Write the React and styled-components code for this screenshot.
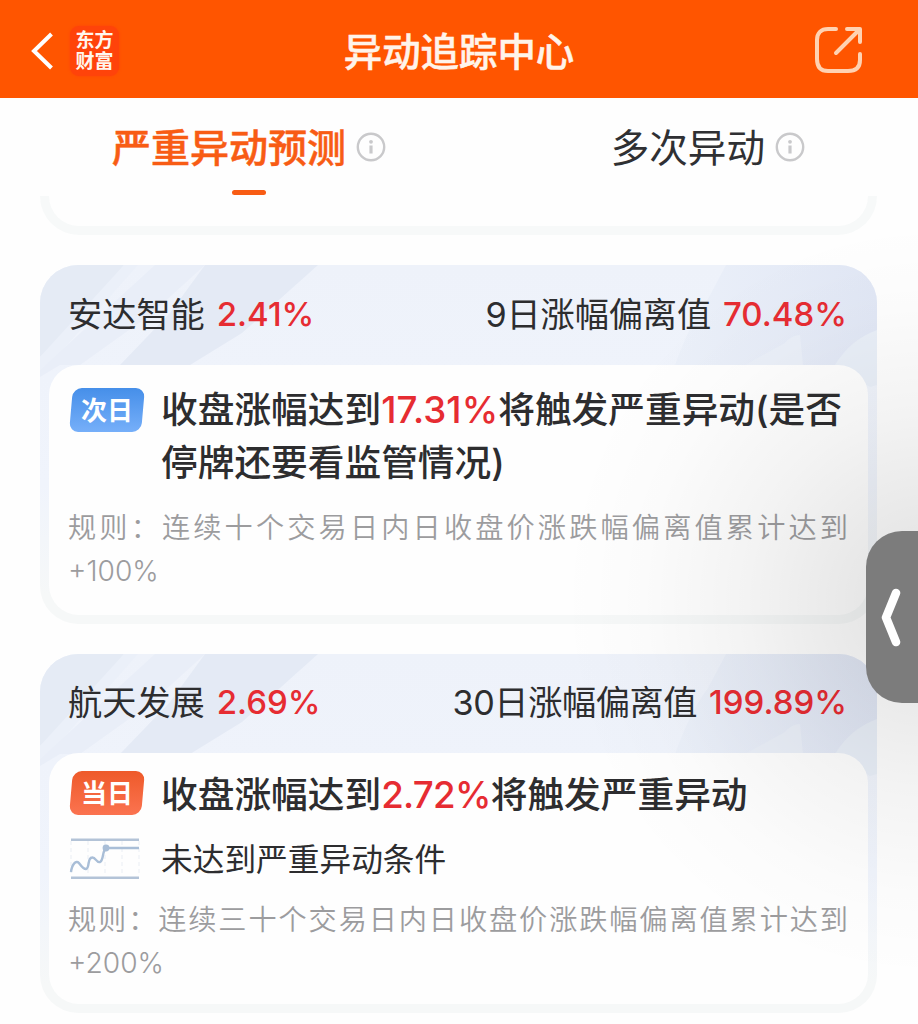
import React from "react";
import styled, { createGlobalStyle } from "styled-components";

const GlobalStyle = createGlobalStyle`
    * {
        box-sizing: border-box;
    }

    body {
        margin: 0;
        background-color: #fefefe;
        font-family: Inter, "Noto Sans CJK SC", sans-serif;
        color: #2d2d2f;
    }
`;

const Page = styled.div`
    position: relative;
    width: 918px;
    height: 1024px;
    overflow: hidden;
    display: flex;
    flex-direction: column;
`;

const TopBar = styled.header`
    height: 98px;
    flex-shrink: 0;
    padding: 3px 56px 0 31px;
    display: grid;
    grid-template-columns: 200px 1fr 175px;
    align-items: center;
    background-color: #ff5500;
`;

const TopLeft = styled.div`
    display: flex;
    align-items: center;
    gap: 17px;
`;

const Logo = styled.div`
    width: 49px;
    height: 50px;
    padding-top: 4px;
    border-radius: 9px;
    background-color: #ff430a;
    box-shadow: 0 0 3px #ff430a;
    color: #fff6ee;
    font-size: 19px;
    font-weight: 700;
    line-height: 21px;
    text-align: center;
`;

const Title = styled.h1`
    margin: 0;
    padding-top: 2px;
    color: #fff4ea;
    font-size: 38.4px;
    font-weight: 500;
    line-height: 50px;
    text-align: center;
    -webkit-text-stroke: 0.5px #fff4ea;
`;

const TopRight = styled.div`
    display: flex;
    justify-content: flex-end;
    padding-bottom: 2px;
`;

const Tabs = styled.nav`
    height: 98px;
    flex-shrink: 0;
    display: flex;
    justify-content: space-between;
    padding: 24px 113px 0 112px;
`;

const Tab = styled.div`
    display: flex;
    flex-direction: column;
    gap: 16px;
    font-size: ${(props) => (props.$active ? "39px" : "38.6px")};
    font-weight: ${(props) => (props.$active ? 500 : 400)};
    color: ${(props) => (props.$active ? "#f85c14" : "#2f3033")};
    -webkit-text-stroke: ${(props) => (props.$active ? "0.5px" : "0")};
`;

const TabLabel = styled.div`
    display: flex;
    align-items: center;
    gap: 10px;
    line-height: 52px;

    svg {
        margin-bottom: 2px;
    }
`;

const TabLine = styled.div`
    width: 34px;
    height: 5px;
    margin-left: 120px;
    border-radius: 3px;
    background-color: #f85c14;
`;

const List = styled.main`
    display: flex;
    flex-direction: column;
    padding-left: 40px;
    gap: 30px;
    overflow: hidden;
    flex: 1;
`;

const CardEnd = styled.div`
    width: 837px;
    height: 39px;
    flex-shrink: 0;
    border: 9px solid #f7f9f9;
    border-top: none;
    border-radius: 0 0 42px 42px;
`;

const Card = styled.section`
    position: relative;
    width: 837px;
    height: 359px;
    flex-shrink: 0;
    padding: 0 9px 9px;
    border-radius: 38px;
    overflow: hidden;
    display: flex;
    flex-direction: column;
    background: linear-gradient(#eef2fa 0, #f0f4fc 220px, #f6f8f8 330px);
`;

const Pattern = styled.svg`
    position: absolute;
    left: 0;
    top: 0;
`;

const CardHead = styled.div`
    position: relative;
    height: ${(props) => props.$height}px;
    padding: 0 21px 1px 19px;
    display: flex;
    align-items: center;
    justify-content: space-between;
    font-size: 34.2px;
    line-height: 50px;
`;

const Pair = styled.div`
    display: flex;
    gap: 12px;
`;

const Label = styled.span`
    letter-spacing: ${(props) => props.$spacing || 0}px;
`;

const Percent = styled.span`
    color: #e62c32;
    font-size: 33px;
    font-weight: 500;
    line-height: 48px;
`;

const Panel = styled.div`
    position: relative;
    flex: 1;
    padding: ${(props) => props.$top}px 20px 0 19px;
    border-radius: 30px;
    background-color: #fefefe;
`;

const Row = styled.div`
    display: flex;
    align-items: flex-start;
    gap: 15px;
`;

const Badge = styled.div`
    width: 72px;
    height: 44px;
    margin: ${(props) => props.$top}px 3px 0 3px;
    border-radius: 9px;
    transform: skewX(-5deg);
    background: ${(props) =>
        props.$today
            ? "linear-gradient(#ee5a2a, #fb7350)"
            : "linear-gradient(#468fe9, #76aff9)"};
    color: #fff;
    font-size: 26px;
    font-weight: 700;
    line-height: 45px;
    text-align: center;

    span {
        display: block;
        transform: skewX(5deg);
    }
`;

const Headline = styled.div`
    flex: 1;
    font-size: 36.7px;
    font-weight: 500;
    line-height: 53px;
    white-space: nowrap;

    em {
        color: #e62c32;
        font-style: normal;
        letter-spacing: ${(props) => props.$spacing}px;
    }
`;

const StatusRow = styled.div`
    height: 76px;
    display: flex;
    align-items: center;
    gap: 20px;
    padding: 0 0 5px 1px;
    font-size: 31.7px;

    svg {
        margin-top: 5px;
    }
`;

const Rule = styled.p`
    margin: ${(props) => props.$top}px 0 0;
    color: #9c9c9e;
    font-size: 28.2px;
    font-weight: 350;
    line-height: 43px;
    text-align: justify;
`;

const Shade = styled.div`
    position: absolute;
    inset: 196px 0 0 0;
    background: radial-gradient(
        ellipse 370px 380px at 930px 405px,
        rgba(0, 0, 0, 0.12) 0%,
        rgba(0, 0, 0, 0.085) 22%,
        rgba(0, 0, 0, 0.042) 50%,
        rgba(0, 0, 0, 0.013) 78%,
        rgba(0, 0, 0, 0) 100%
    );
    pointer-events: none;
`;

const Handle = styled.div`
    position: absolute;
    right: 0;
    top: 531px;
    width: 52px;
    height: 172px;
    padding-left: 15px;
    border-radius: 36px 0 0 36px;
    display: flex;
    align-items: center;
    background-color: #7c7c7c;
`;

const BackIcon = () => (
    <svg width="22" height="38" viewBox="0 0 22 38" fill="none" stroke="#fff" strokeWidth="4">
        <path d="M20.5 2 3 19 20.5 36" />
    </svg>
);

const ShareIcon = () => (
    <svg width="48" height="48" viewBox="0 0 48 48" fill="none" stroke="#ffd2b2" strokeWidth="4" strokeLinecap="round">
        <path d="M22 3H14C7 3 3 7 3 14V33C3 41 7 45 14 45H34C42 45 46 41 46 34V28" />
        <path d="M33 3H46V16M45 4 22 27" strokeLinejoin="round" />
    </svg>
);

const InfoIcon = () => (
    <svg width="30" height="30" viewBox="0 0 30 30" fill="none" stroke="#c9c9cb">
        <circle cx="15" cy="15" r="13.2" strokeWidth="2.4" />
        <path d="M15 13.5V21.5" strokeWidth="3.2" />
        <circle cx="15" cy="9.8" r="1.9" fill="#c9c9cb" stroke="none" />
    </svg>
);

const TrendIcon = () => (
    <svg width="72" height="42" viewBox="0 0 72 42" fill="none" stroke="#a9bed7" strokeWidth="2.4">
        <path d="M2 1.8H70M2 39.8H70" stroke="#b3c3d7" strokeWidth="2.4" />
        <path d="M2 3V38M19 3V38M36 3V38M53 3V38M70 3V38" stroke="#eaeef4" strokeWidth="1" strokeDasharray="4 3" />
        <path d="M2 34C3 26 7 22 10 25C13 29 14 31 17 31C21 30 18 20 23 19.5C27 19 27 25 31 24C35 22 33 13 37 10H70" />
        <circle cx="37" cy="10" r="3.4" fill="#a9bed7" stroke="none" />
    </svg>
);

const HandleIcon = () => (
    <svg width="22" height="60" viewBox="0 0 22 60" fill="none" stroke="#fff" strokeWidth="8.6" strokeLinecap="round" strokeLinejoin="round">
        <path d="M15 6 5 30.5 15 55" />
    </svg>
);

const HeadPattern = ({ id }) => (
    <Pattern width="837" height="140" viewBox="0 0 837 140">
        <defs>
            <linearGradient id={id} x1="0" x2="1" y1="0" y2="0">
                <stop offset="0" stopColor="#ebf0f9" />
                <stop offset="1" stopColor="#e1e7f5" />
            </linearGradient>
        </defs>
        <path d="M0 0H84L34 62L0 92Z" fill="#e5ebf5" />
        <path d="M84 0H98L20 88L0 105V92Z" fill="#ebf0f9" />
        <path d="M115 0H165L110 50L40 100H20L0 112V105Z" fill="#e9eef8" />
        <path d="M165 0H278L202 68L150 100H80L130 48Z" fill="#e4eaf5" />
        <path d="M686 0H837V68L798 100H635Q650 58 668 34Z" fill={`url(#${id})`} />
        <path d="M745 78Q752 70 760 70L763 100H705Z" fill="#eaeff8" />
        <path d="M837 65Q810 75 795 100L830 122L837 120Z" fill="#e9eff8" />
    </Pattern>
);

const stocks = [
    {
        name: "安达智能",
        change: "2.41%",
        days: "9日涨幅偏离值",
        daysSpacing: -0.1,
        deviation: "70.48%",
        badge: "次日",
        target: "17.31%",
        targetSpacing: 0.1,
        tail: ["将触发严重异动(是否", "停牌还要看监管情况)"],
        rule: "规则：连续十个交易日内日收盘价涨跌幅偏离值累计达到+100%",
        headHeight: 100,
        panelTop: 18,
        badgeTop: 5,
        ruleTop: 18,
    },
    {
        name: "航天发展",
        change: "2.69%",
        days: "30日涨幅偏离值",
        daysSpacing: -0.4,
        deviation: "199.89%",
        badge: "当日",
        today: true,
        target: "2.72%",
        targetSpacing: -0.7,
        tail: ["将触发严重异动"],
        status: "未达到严重异动条件",
        rule: "规则：连续三十个交易日内日收盘价涨跌幅偏离值累计达到+200%",
        headHeight: 99,
        panelTop: 15,
        badgeTop: 3,
        ruleTop: 2,
    },
];

const StockCard = ({ item }) => {
    return (
        <Card>
            <HeadPattern id={item.today ? "fade-today" : "fade-next"} />
            <CardHead $height={item.headHeight}>
                <Pair>
                    <Label>{item.name}</Label>
                    <Percent>{item.change}</Percent>
                </Pair>
                <Pair>
                    <Label $spacing={item.daysSpacing}>{item.days}</Label>
                    <Percent>{item.deviation}</Percent>
                </Pair>
            </CardHead>
            <Panel $top={item.panelTop}>
                <Row>
                    <Badge $today={item.today} $top={item.badgeTop}>
                        <span>{item.badge}</span>
                    </Badge>
                    <Headline $spacing={item.targetSpacing}>
                        收盘涨幅达到<em>{item.target}</em>
                        {item.tail[0]}
                        {item.tail[1] && <br />}
                        {item.tail[1]}
                    </Headline>
                </Row>
                {item.status && (
                    <StatusRow>
                        <TrendIcon />
                        {item.status}
                    </StatusRow>
                )}
                <Rule $top={item.ruleTop}>{item.rule}</Rule>
            </Panel>
        </Card>
    );
};

const App = () => {
    return (
        <Page>
            <GlobalStyle />
            <TopBar>
                <TopLeft>
                    <BackIcon />
                    <Logo>
                        东方
                        <br />
                        财富
                    </Logo>
                </TopLeft>
                <Title>异动追踪中心</Title>
                <TopRight>
                    <ShareIcon />
                </TopRight>
            </TopBar>
            <Tabs>
                <Tab $active>
                    <TabLabel>
                        严重异动预测
                        <InfoIcon />
                    </TabLabel>
                    <TabLine />
                </Tab>
                <Tab>
                    <TabLabel>
                        多次异动
                        <InfoIcon />
                    </TabLabel>
                </Tab>
            </Tabs>
            <List>
                <CardEnd />
                {stocks.map((item, i) => (
                    <StockCard key={i} item={item} />
                ))}
            </List>
            <Shade />
            <Handle>
                <HandleIcon />
            </Handle>
        </Page>
    );
};

export default App;
